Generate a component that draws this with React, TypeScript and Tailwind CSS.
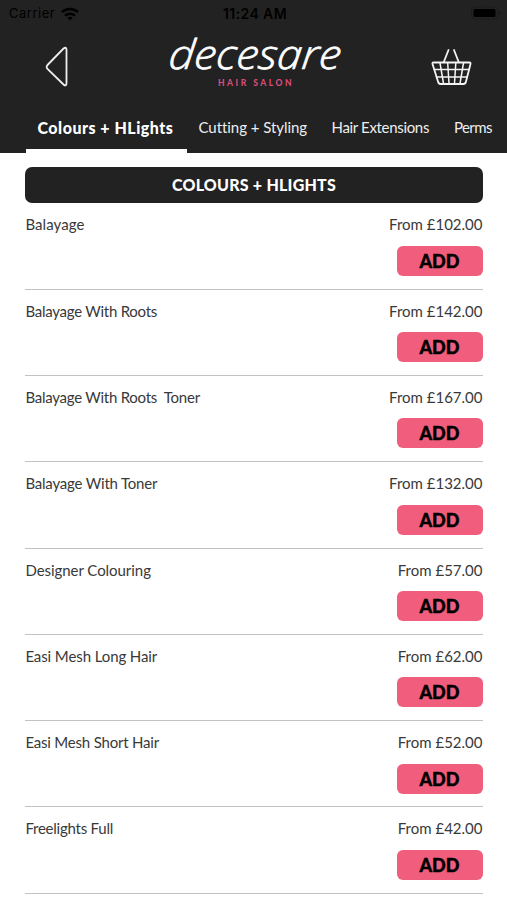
import React from "react";

type Service = { name: string; price: string; nameClass: string };

const services: Service[] = [
  { name: "Balayage", price: "From £102.00", nameClass: "tracking-[0.08px]" },
  { name: "Balayage With Roots", price: "From £142.00", nameClass: "tracking-[-0.25px]" },
  { name: "Balayage With Roots  Toner", price: "From £167.00", nameClass: "tracking-[-0.25px]" },
  { name: "Balayage With Toner", price: "From £132.00", nameClass: "tracking-[-0.2px]" },
  { name: "Designer Colouring", price: "From £57.00", nameClass: "tracking-[-0.05px]" },
  { name: "Easi Mesh Long Hair", price: "From £62.00", nameClass: "tracking-[-0.1px]" },
  { name: "Easi Mesh Short Hair", price: "From £52.00", nameClass: "tracking-[-0.2px]" },
  { name: "Freelights Full", price: "From £42.00", nameClass: "tracking-[-0.23px]" },
];

function StatusBar() {
  return (
    <div className="grid h-7 grid-cols-3 items-center pl-[9px] pr-[6px] font-[Inter,sans-serif] text-[13px] text-black">
      <div className="flex items-center gap-[6px]">
        <span className="tracking-[0.5px]">Carrier</span>
        <svg width="18" height="14" viewBox="0 0 18 14" fill="none" stroke="currentColor" strokeWidth="2.5">
          <path d="M1 5.2C5.4.8 12.6.8 17 5.2" />
          <path d="M4 8.6c2.8-2.6 7.2-2.6 10 0" />
          <path d="M6.400 10.800C7.800 9.500 10.200 9.500 11.600 10.800L9 13.400Z" fill="currentColor" stroke="none" />
        </svg>
      </div>
      <span className="-mt-[2px] text-center text-[14px] font-semibold tracking-[0.4px]">11:24 AM</span>
      <svg className="-mt-[2px] justify-self-end" width="30" height="14" viewBox="0 0 30 14">
        <rect x=".5" y="1" width="26" height="12" rx="3" fill="none" stroke="#1c1c1c" />
        <rect x="2.500" y="3" width="22" height="8" rx="1.500" />
        <path d="M28 5v4c1-.4 1.500-1 1.500-2S29 5.400 28 5Z" fill="#181818" />
      </svg>
    </div>
  );
}

function Logo() {
  return (
    <svg className="overflow-visible" width="180" height="62" viewBox="0 0 180 62" fill="#fff">
      <text x="8" y="41" textLength="172" lengthAdjust="spacingAndGlyphs" fontSize="41" fontStyle="italic" fontWeight="300" fontFamily="Open Sans, sans-serif" stroke="#fff" strokeWidth=".7" transform="skewX(-6)">decesare</text>
      <text x="54" y="58" textLength="73.500" fontSize="8.500" fontWeight="900" fontFamily="Lato, sans-serif" fill="#d94c78">HAIR SALON</text>
    </svg>
  );
}

function Basket() {
  return (
    <svg width="42" height="38" viewBox="0 0 42 38" fill="none" stroke="#f4f4f4" strokeWidth="1.500" strokeLinecap="round" strokeLinejoin="round">
      <path d="M12.800 14 17.500 2M27.700 14 23 2" strokeWidth="1.800" />
      <path d="M2.500 14.500h36c1 0 1.200.7 1 1.500l-4.500 17.500c-.4 1.700-1 2.500-2.500 2.500H9.500C8 36 7.400 35.200 7 33.500L1.500 16c-.2-.8 0-1.500 1-1.500Z" strokeWidth="1.800" />
      <path d="M3.500 21.500h34.500M5.500 29h30.500M9 15l3.500 20.500M16.700 15l1.300 20.500M24.800 15l-1.300 20.500M32.500 15 29 35.500" />
    </svg>
  );
}

function Header() {
  return (
    <header className="flex h-[153px] flex-col bg-[#222222]">
      <StatusBar />
      <div className="grid h-[76px] grid-cols-[164px_1fr_164px]">
        <button className="ml-[45px] mt-[17px] h-[44px] w-[25px]" aria-label="Back">
          <svg width="25" height="44" viewBox="0 0 25 44" fill="none" stroke="#eeeeee" strokeWidth="1.800">
            <path d="M2.500 20 18.500 3.500Q21.500 1.500 21.500 5V38Q21.500 42 18.500 39.500L2.500 24Q.8 22 2.500 20Z" />
          </svg>
        </button>
        <Logo />
        <button className="ml-[87px] mt-[20px] h-[38px] w-[42px]" aria-label="Basket"><Basket /></button>
      </div>
      <nav className="flex h-[49px] overflow-hidden pl-[25.500px] text-[15px] leading-[47px] whitespace-nowrap text-[#eeeeee]">
        <span className="w-[161px] shrink-0 border-b-[4px] border-white pl-[12px] text-[16px] font-black tracking-[0.5px] text-white">Colours + HLights</span>
        <span className="w-[145px] shrink-0 pl-[12px] tracking-[-0.05px]">Cutting + Styling</span>
        <span className="w-[122.500px] shrink-0 tracking-[-0.33px]">Hair Extensions</span>
        <span className="shrink-0 tracking-[-0.6px]">Perms</span>
      </nav>
    </header>
  );
}

function ServiceRow({ name, price, nameClass }: Service) {
  return (
    <li className="flex h-[86.3px] justify-between border-b-[1.500px] border-[#c2c2c2] pt-[10px] text-[15px] leading-[22px] text-[#393939]">
      <span className={`whitespace-pre ${nameClass}`}>{name}</span>
      <div className="flex flex-col items-end gap-[10.500px]">
        <span>{price}</span>
        <button className="h-[30px] w-[86px] rounded-[6px] bg-[#f15d7d] text-[18px] leading-[30px] font-black text-black [-webkit-text-stroke:0.4px_black]">ADD</button>
      </div>
    </li>
  );
}

export default function App() {
  return (
    <div className="h-[900px] overflow-hidden bg-white font-[Lato,sans-serif]">
      <Header />
      <main className="pl-[25.400px] pr-[24.500px] pt-[14px]">
        <h1 className="h-[36px] rounded-[7px] bg-[#222222] text-center text-[16px] leading-[36px] font-black tracking-[0.22px] text-white">COLOURS + HLIGHTS</h1>
        <ul className="pt-[0.400px]">{services.map((service) => <ServiceRow key={service.name} {...service} />)}</ul>
      </main>
    </div>
  );
}
